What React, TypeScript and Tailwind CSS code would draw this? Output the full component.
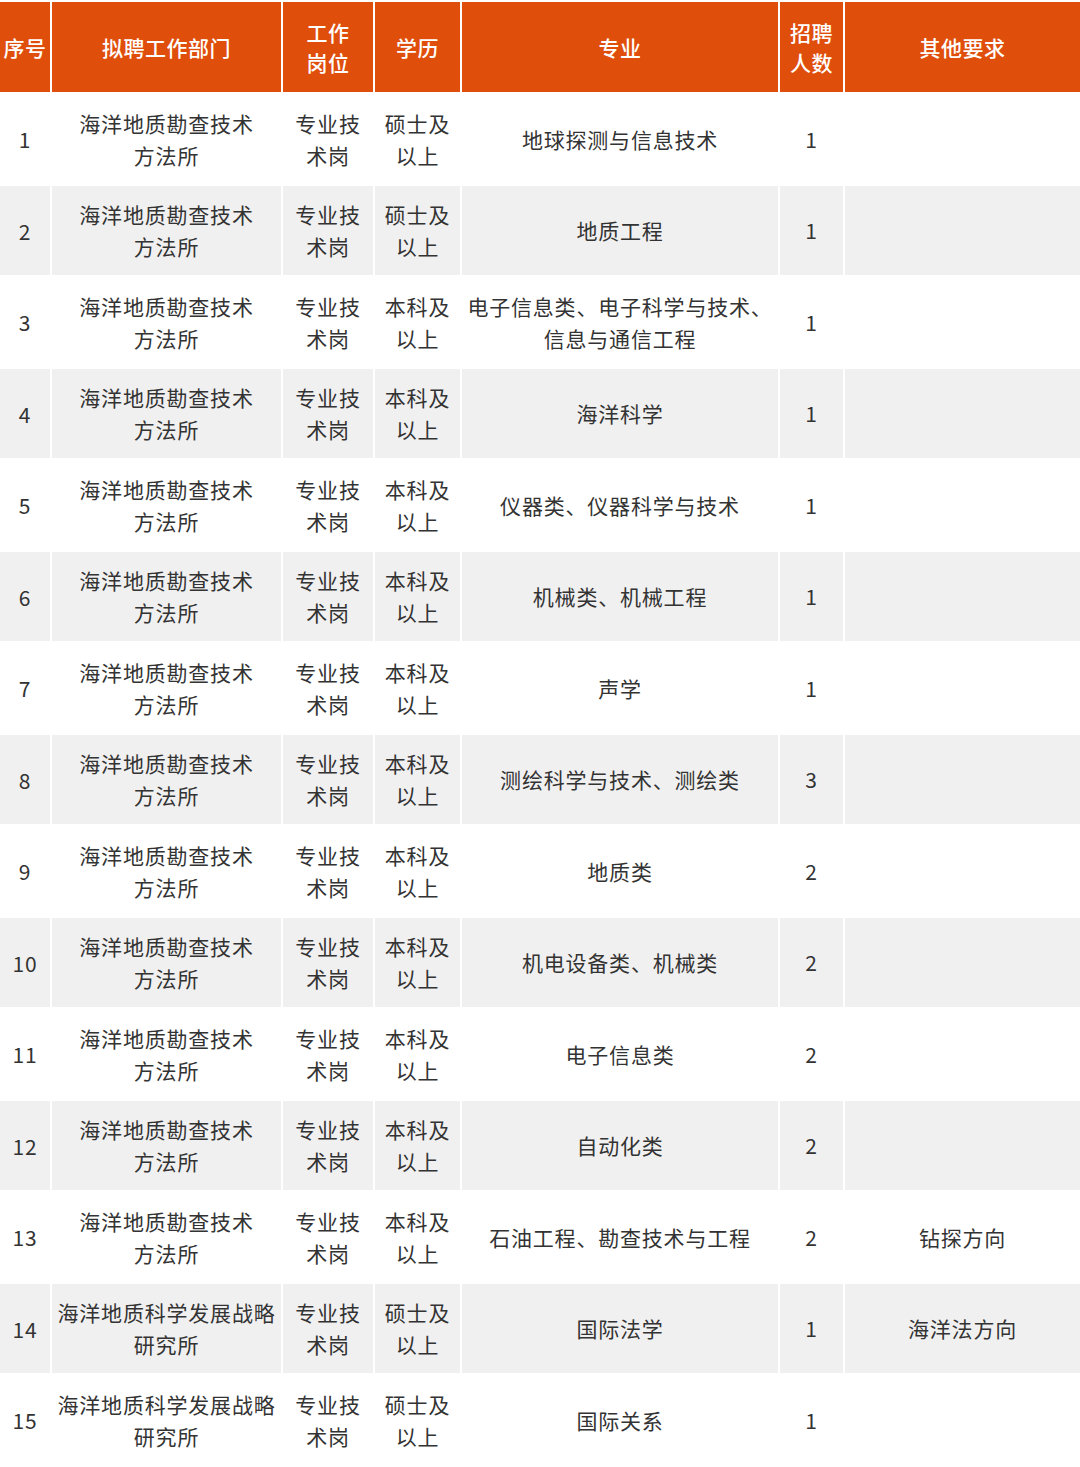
const HEADERS: string[][] = [
  ['序号'],
  ['拟聘工作部门'],
  ['工作', '岗位'],
  ['学历'],
  ['专业'],
  ['招聘', '人数'],
  ['其他要求'],
]

interface Row {
  dept: string[]
  degree: string
  major: string[]
  count: number
  other?: string
}

const GEO = ['海洋地质勘查技术', '方法所']
const STRAT = ['海洋地质科学发展战略', '研究所']

const ROWS: Row[] = [
  { dept: GEO, degree: '硕士', major: ['地球探测与信息技术'], count: 1 },
  { dept: GEO, degree: '硕士', major: ['地质工程'], count: 1 },
  { dept: GEO, degree: '本科', major: ['电子信息类、电子科学与技术、', '信息与通信工程'], count: 1 },
  { dept: GEO, degree: '本科', major: ['海洋科学'], count: 1 },
  { dept: GEO, degree: '本科', major: ['仪器类、仪器科学与技术'], count: 1 },
  { dept: GEO, degree: '本科', major: ['机械类、机械工程'], count: 1 },
  { dept: GEO, degree: '本科', major: ['声学'], count: 1 },
  { dept: GEO, degree: '本科', major: ['测绘科学与技术、测绘类'], count: 3 },
  { dept: GEO, degree: '本科', major: ['地质类'], count: 2 },
  { dept: GEO, degree: '本科', major: ['机电设备类、机械类'], count: 2 },
  { dept: GEO, degree: '本科', major: ['电子信息类'], count: 2 },
  { dept: GEO, degree: '本科', major: ['自动化类'], count: 2 },
  { dept: GEO, degree: '本科', major: ['石油工程、勘查技术与工程'], count: 2, other: '钻探方向' },
  { dept: STRAT, degree: '硕士', major: ['国际法学'], count: 1, other: '海洋法方向' },
  { dept: STRAT, degree: '硕士', major: ['国际关系'], count: 1 },
]

const GRID = 'grid grid-cols-[50px_229px_90px_85px_316px_63px_1fr] gap-x-[2px]'

function Lines({ lines }: { lines: string[] }) {
  return (
    <div className="flex flex-col items-center">
      {lines.map((l, i) => (
        <span key={i} className="whitespace-nowrap">
          {l}
        </span>
      ))}
    </div>
  )
}

export default function App() {
  return (
    <div
      className="w-[1080px] bg-white pt-[2px]"
      style={{ fontFamily: '"Noto Sans CJK SC", "Noto Sans", sans-serif' }}
    >
      <div className={`${GRID} h-[90px]`}>
        {HEADERS.map((h, i) => (
          <div
            key={i}
            className="flex items-center justify-center bg-[#e04e0c] text-[21px] font-medium leading-[30px] tracking-[0.5px] text-white"
          >
            <Lines lines={h} />
          </div>
        ))}
      </div>
      <div className="mt-[2px] flex flex-col gap-y-[2px]">
        {ROWS.map((r, i) => {
          const bg = i % 2 === 0 ? 'bg-white' : 'bg-[#f1f0f1]'
          const cell = `flex items-center justify-center ${bg}`
          return (
            <div
              key={i}
              className={`${GRID} h-[89.5px] text-[21px] leading-[32px] tracking-[0.8px] text-[#333333]`}
            >
              <div className={`${cell} pt-[1px]`}>{i + 1}</div>
              <div className={cell}>
                <Lines lines={r.dept} />
              </div>
              <div className={cell}>
                <Lines lines={['专业技', '术岗']} />
              </div>
              <div className={cell}>
                <Lines lines={[r.degree + '及', '以上']} />
              </div>
              <div className={cell}>
                <Lines lines={r.major} />
              </div>
              <div className={cell}>{r.count}</div>
              <div className={cell}>{r.other ?? ''}</div>
            </div>
          )
        })}
      </div>
    </div>
  )
}
